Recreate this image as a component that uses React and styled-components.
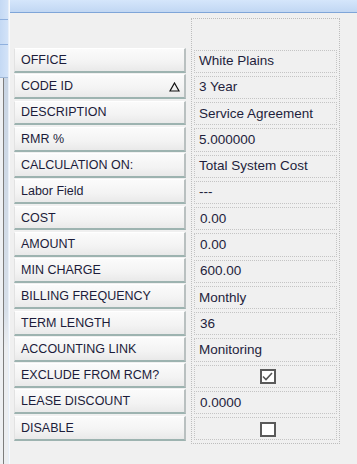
import React from "react";
import styled, { createGlobalStyle } from "styled-components";

const Global = createGlobalStyle`
  html, body { margin: 0; padding: 0; background: #f0f0f0; }
  body { width: 357px; height: 464px; overflow: hidden; }
  * { box-sizing: border-box; }
`;

const Page = styled.div`
  display: flex;
  width: 357px;
  height: 464px;
  overflow: hidden;
  font-family: "Liberation Sans", Arial, sans-serif;
`;

const SideStrip = styled.div`
  width: 8px;
  display: flex;
  flex-direction: column;
  background: #eef0f3;
`;

const SideTab = styled.div`
  height: ${(p) => p.$h}px;
  background: linear-gradient(90deg, #c4d9f4, #d3e3f8);
  border-bottom: 1px solid ${(p) => (p.$last ? "#9fb7d6" : "#8fb0de")};
`;

const SideFrame = styled.div`
  flex: 1;
  margin-left: 3px;
  border-left: 1px solid #7d7d7d;
  background: linear-gradient(180deg, #c9d5e4 0%, #d7dfe9 60%, #eceef1 70%);
`;

const Divider = styled.div`
  width: 2px;
  background: linear-gradient(90deg, #dfe9f6, #ffffff);
`;

const Main = styled.div`
  flex: 1;
  display: flex;
  flex-direction: column;
`;

const TopBar = styled.div`
  height: 13px;
  flex: none;
  background: linear-gradient(180deg, #d5e6fb, #c1d7f3);
  border-bottom: 1px solid #7fa5d8;
  box-shadow: 0 1px 0 #e4ecf6;
`;

const Body = styled.div`
  flex: 1;
  display: flex;
  gap: 5px;
  padding: 5px 0 0 4px;
  background: #f0f0f0;
`;

const LabelColumn = styled.div`
  width: 172px;
  display: flex;
  flex-direction: column;
  padding-top: 30px;
`;

const LabelSlot = styled.div`
  height: 26.28px;
  padding-bottom: 1.4px;
  display: flex;
`;

const LabelButton = styled.div`
  flex: 1;
  display: flex;
  align-items: center;
  justify-content: space-between;
  padding: 0 4px 0 6px;
  background: linear-gradient(180deg, #fbfbfb 0%, #f3f3f3 60%, #e9e9e9 100%);
  border-top: 1px solid #ffffff;
  border-left: 1px solid #e2e2e2;
  border-right: 2px solid #b9c0c0;
  border-bottom: 2px solid #9db3b0;
  color: #1c1c3a;
  font-size: 12.5px;
  white-space: nowrap;
`;

const SortIcon = styled.svg`
  width: 11px;
  height: 10px;
  margin-top: 2px;
`;

const ValueColumn = styled.div`
  width: 149px;
  height: 426px;
  display: flex;
  flex-direction: column;
  border: 1px dotted #bdbdbd;
`;

const HeaderCell = styled.div`
  height: 30px;
  flex: none;
`;

const ValueSlot = styled.div`
  height: 26.28px;
  flex: none;
  padding: 0.5px 2px 2.5px 2px;
  display: flex;
`;

const ValueCell = styled.div`
  flex: 1;
  display: flex;
  align-items: center;
  justify-content: ${(p) => (p.$center ? "center" : "flex-start")};
  padding-left: ${(p) => (p.$indent ? 5 : 4)}px;
  padding-right: 0;
  padding-bottom: 1px;
  border: 1px dotted #c4c4c4;
  color: #1e1e3c;
  font-size: 13.5px;
  white-space: nowrap;
`;

const CheckBox = styled.div`
  width: 16px;
  height: 15px;
  margin-top: 2px;
  border: 2px solid #5a5a5a;
  background: #ffffff;
  display: flex;
  align-items: center;
  justify-content: center;
`;

const rows = [
  { label: "OFFICE", value: "White Plains" },
  { label: "CODE ID", value: "3 Year", sort: true },
  { label: "DESCRIPTION", value: "Service Agreement" },
  { label: "RMR %", value: "5.000000" },
  { label: "CALCULATION ON:", value: "Total System Cost" },
  { label: "Labor Field", value: "---" },
  { label: "COST", value: "0.00", indent: true },
  { label: "AMOUNT", value: "0.00", indent: true },
  { label: "MIN CHARGE", value: "600.00", indent: true },
  { label: "BILLING FREQUENCY", value: "Monthly" },
  { label: "TERM LENGTH", value: "36", indent: true },
  { label: "ACCOUNTING LINK", value: "Monitoring" },
  { label: "EXCLUDE FROM RCM?", check: true, checked: true },
  { label: "LEASE DISCOUNT", value: "0.0000", indent: true },
  { label: "DISABLE", check: true, checked: false },
];

export default function App() {
  return (
    <>
      <Global />
      <Page>
        <SideStrip>
          <SideTab $h={20} />
          <SideTab $h={25} />
          <SideTab $h={33} $last />
          <SideFrame />
        </SideStrip>
        <Divider />
        <Main>
          <TopBar />
          <Body>
            <LabelColumn>
              {rows.map((r) => (
                <LabelSlot key={r.label}>
                  <LabelButton>
                    <span>{r.label}</span>
                    {r.sort && (
                      <SortIcon viewBox="0 0 11 10">
                        <path d="M5.5 1 L10 9 L1 9 Z" fill="none" stroke="#111" strokeWidth="1.2" strokeLinejoin="miter" />
                      </SortIcon>
                    )}
                  </LabelButton>
                </LabelSlot>
              ))}
            </LabelColumn>
            <ValueColumn>
              <HeaderCell />
              {rows.map((r) => (
                <ValueSlot key={r.label}>
                  <ValueCell $center={r.check} $indent={r.indent}>
                    {r.check ? (
                      <CheckBox>
                        {r.checked && (
                          <svg width="11" height="9" viewBox="0 0 11 9">
                            <path d="M1 4.5 L4 7.5 L10 1" fill="none" stroke="#555" strokeWidth="1.6" />
                          </svg>
                        )}
                      </CheckBox>
                    ) : (
                      r.value
                    )}
                  </ValueCell>
                </ValueSlot>
              ))}
            </ValueColumn>
          </Body>
        </Main>
      </Page>
    </>
  );
}
